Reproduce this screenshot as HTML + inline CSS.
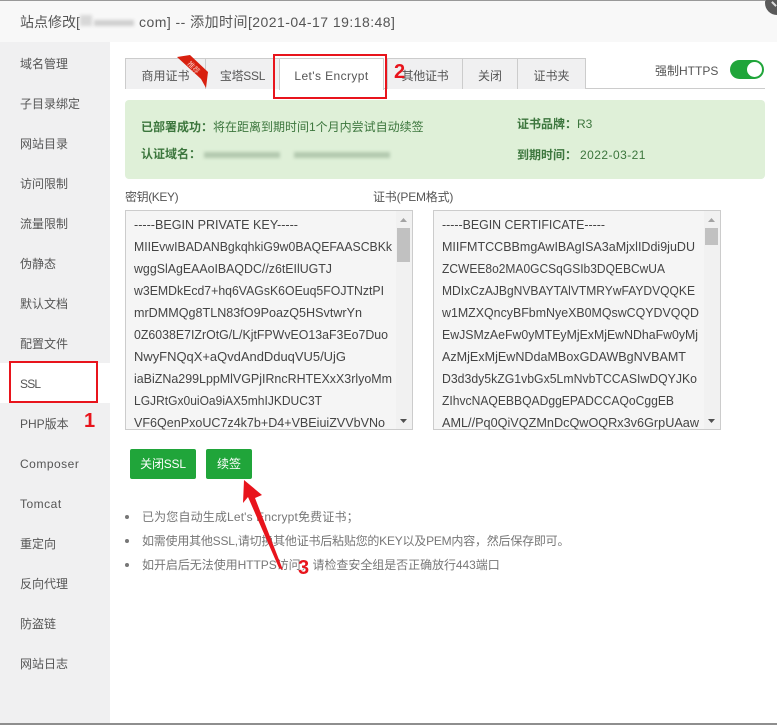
<!DOCTYPE html>
<html lang="zh">
<head>
<meta charset="utf-8">
<title>站点修改</title>
<style>
html,body{margin:0;padding:0;background:#fff}
#p{position:relative;width:777px;height:725px;overflow:hidden;background:#fff;font-family:"Liberation Sans","Noto Sans CJK SC",sans-serif;font-size:12px;color:#555}
#p div,#p span.a{position:absolute;white-space:nowrap}
.top{left:0;top:0;width:765px;height:1px;background:#999}
.head{left:0;top:1px;width:777px;height:41px;background:#f8f8f8}
.title{left:20px;top:13px;font-size:14px;line-height:18px;color:#555}
.side{left:0;top:42px;width:110px;height:681px;background:#f0f0f1}
.item{left:20px;line-height:20px;font-size:12px;color:#555}
.ssl{left:0;top:363px;width:110px;height:40px;background:#fff}
.bottom{left:0;top:723px;width:777px;height:2px;background:#8e8e8e}
.tabline{left:125px;top:88px;width:640px;height:1px;background:#ccc}
.tab{top:58px;height:30px;background:#f0f0f1;border:1px solid #ccc;border-bottom:0;box-sizing:content-box;text-align:center;line-height:35px;font-size:12px;color:#555}
.tab.on{background:#fff;height:31px;z-index:2}
.box{left:125px;top:100px;width:640px;height:79px;background:#dff0d8;border-radius:4px}
.g{color:#3c763d;line-height:18px;font-size:12px}
.b{font-weight:bold}
.lab{top:188px;line-height:18px;font-size:12px;color:#555}
.ta{top:210px;width:286px;height:218px;border:1px solid #ccc;background:#f5f5f5}
.sb{top:211px;width:16px;height:218px;background:#f1f1f1}
.th{top:228px;width:13px;background:#c1c1c1}
.btn{top:449px;height:30px;background:#20a53a;border-radius:2px;color:#fff;text-align:center;line-height:31px;font-size:12px}
.li{left:142px;line-height:18px;font-size:12px;color:#777}
.dot{left:125px;width:4px;height:4px;border-radius:50%;background:#777}
.rb{border:2px solid #e8141c;box-sizing:border-box;z-index:5}
.num{color:#e8141c;font-weight:bold;font-size:20px;line-height:22px;z-index:6}
.blur{filter:blur(1.6px)}
svg{position:absolute;left:0;top:0}
svg text{font-family:"Liberation Sans",sans-serif;font-size:12.5px;fill:#444}
</style>
</head>
<body>
<div id="p">
  <div class="head"></div>
  <div class="top"></div>
  <div class="title">站点修改[</div>
  <div class="blur" style="left:80px;top:15px;width:12px;height:11px;background:#d8d8d8"></div>
  <div class="blur" style="left:94px;top:20px;width:40px;height:6px;background:#cfcfcf"></div>
  <div class="title" style="left:139px;letter-spacing:.46px">com] -- 添加时间[2021-04-17 19:18:48]</div>
  <div style="left:765px;top:-9px;width:24px;height:24px;border-radius:50%;background:#5a5a5a"></div>
  <div style="left:771px;top:3px;width:6px;height:2px;background:#ddd;transform:rotate(45deg)"></div>

  <div class="side"></div>
  <div class="ssl"></div>
  <div class="item" style="top:54px">域名管理</div>
  <div class="item" style="top:94px">子目录绑定</div>
  <div class="item" style="top:134px">网站目录</div>
  <div class="item" style="top:174px">访问限制</div>
  <div class="item" style="top:214px">流量限制</div>
  <div class="item" style="top:254px">伪静态</div>
  <div class="item" style="top:294px">默认文档</div>
  <div class="item" style="top:334px">配置文件</div>
  <div class="item" style="top:374px;letter-spacing:-.8px">SSL</div>
  <div class="item" style="top:414px">PHP版本</div>
  <div class="item" style="top:454px;letter-spacing:.5px">Composer</div>
  <div class="item" style="top:494px;letter-spacing:.5px">Tomcat</div>
  <div class="item" style="top:534px">重定向</div>
  <div class="item" style="top:574px">反向代理</div>
  <div class="item" style="top:614px">防盗链</div>
  <div class="item" style="top:654px">网站日志</div>
  <div class="bottom"></div>

  <div class="tabline"></div>
  <div class="tab" style="left:125px;width:79px">商用证书</div>
  <div class="tab" style="left:205px;width:73px;letter-spacing:-.3px">宝塔SSL</div>
  <div class="tab on" style="left:279px;width:103px;letter-spacing:.4px">Let's Encrypt</div>
  <div class="tab" style="left:387px;width:74px;letter-spacing:-.3px">其他证书</div>
  <div class="tab" style="left:462px;width:54px">关闭</div>
  <div class="tab" style="left:517px;width:67px">证书夹</div>
  <svg width="777" height="725" style="z-index:3">
    <polygon points="177,57 190,55 208,72 206,88 201,79" fill="#d8200f"/>
    <text x="194" y="70" text-anchor="middle" transform="rotate(45 194 67)" style="font-family:'Liberation Sans','Noto Sans CJK SC',sans-serif;font-size:7px;fill:#f6c0b8">推荐</text>
  </svg>

  <div style="left:655px;top:62px;line-height:18px;font-size:12px;color:#555">强制HTTPS</div>
  <div style="left:730px;top:60px;width:34px;height:19px;border-radius:10px;background:#20a53a"></div>
  <div style="left:747px;top:62px;width:15px;height:15px;border-radius:50%;background:#fff"></div>

  <div class="box"></div>
  <div class="g b" style="left:141px;top:118px">已部署成功：</div>
  <div class="g" style="left:213px;top:118px">将在距离到期时间1个月内尝试自动续签</div>
  <div class="g b" style="left:141px;top:145px">认证域名：</div>
  <div class="blur" style="left:204px;top:152px;width:76px;height:6px;background:#b3c8af"></div>
  <div class="blur" style="left:294px;top:152px;width:96px;height:6px;background:#b3c9af"></div>
  <div class="g b" style="left:517px;top:115px">证书品牌：</div>
  <div class="g" style="left:577px;top:115px">R3</div>
  <div class="g b" style="left:517px;top:146px">到期时间：</div>
  <div class="g" style="left:580px;top:146px;letter-spacing:.45px">2022-03-21</div>

  <div class="lab" style="left:125px;letter-spacing:-.4px">密钥(KEY)</div>
  <div class="lab" style="left:373px;letter-spacing:-.2px">证书(PEM格式)</div>
  <div class="ta" style="left:125px"></div>
  <div class="ta" style="left:433px"></div>
  <div class="sb" style="left:396px"></div>
  <div class="sb" style="left:704px"></div>
  <div class="th" style="left:397px;height:34px"></div>
  <div class="th" style="left:705px;height:17px"></div>
  <svg width="777" height="725">
    <polygon points="400,222 407,222 403.500,218" fill="#a3a3a3"/>
    <polygon points="400,419 407,419 403.500,423" fill="#505050"/>
    <polygon points="708,222 715,222 711.500,218" fill="#a3a3a3"/>
    <polygon points="708,419 715,419 711.500,423" fill="#505050"/>
    <text x="134" y="229" textLength="164" lengthAdjust="spacingAndGlyphs">-----BEGIN PRIVATE KEY-----</text>
    <text x="134" y="251" textLength="258" lengthAdjust="spacingAndGlyphs">MIIEvwIBADANBgkqhkiG9w0BAQEFAASCBKk</text>
    <text x="134" y="273" textLength="198" lengthAdjust="spacingAndGlyphs">wggSlAgEAAoIBAQDC//z6tEIlUGTJ</text>
    <text x="134" y="295" textLength="250" lengthAdjust="spacingAndGlyphs">w3EMDkEcd7+hq6VAGsK6OEuq5FOJTNztPI</text>
    <text x="134" y="317" textLength="228" lengthAdjust="spacingAndGlyphs">mrDMMQg8TLN83fO9PoazQ5HSvtwrYn</text>
    <text x="134" y="339" textLength="254" lengthAdjust="spacingAndGlyphs">0Z6038E7IZrOtG/L/KjtFPWvEO13aF3Eo7Duo</text>
    <text x="134" y="361" textLength="212" lengthAdjust="spacingAndGlyphs">NwyFNQqX+aQvdAndDduqVU5/UjG</text>
    <text x="134" y="383" textLength="258" lengthAdjust="spacingAndGlyphs">iaBiZNa299LppMlVGPjIRncRHTEXxX3rlyoMm</text>
    <text x="134" y="405" textLength="188" lengthAdjust="spacingAndGlyphs">LGJRtGx0uiOa9iAX5mhIJKDUC3T</text>
    <text x="134" y="427" textLength="251" lengthAdjust="spacingAndGlyphs">VF6QenPxoUC7z4k7b+D4+VBEiuiZVVbVNo</text>
    <text x="442" y="229" textLength="163" lengthAdjust="spacingAndGlyphs">-----BEGIN CERTIFICATE-----</text>
    <text x="442" y="251" textLength="253" lengthAdjust="spacingAndGlyphs">MIIFMTCCBBmgAwIBAgISA3aMjxlIDdi9juDU</text>
    <text x="442" y="273" textLength="223" lengthAdjust="spacingAndGlyphs">ZCWEE8o2MA0GCSqGSIb3DQEBCwUA</text>
    <text x="442" y="295" textLength="253" lengthAdjust="spacingAndGlyphs">MDIxCzAJBgNVBAYTAlVTMRYwFAYDVQQKE</text>
    <text x="442" y="317" textLength="257" lengthAdjust="spacingAndGlyphs">w1MZXQncyBFbmNyeXB0MQswCQYDVQQD</text>
    <text x="442" y="339" textLength="256" lengthAdjust="spacingAndGlyphs">EwJSMzAeFw0yMTEyMjExMjEwNDhaFw0yMj</text>
    <text x="442" y="361" textLength="244" lengthAdjust="spacingAndGlyphs">AzMjExMjEwNDdaMBoxGDAWBgNVBAMT</text>
    <text x="442" y="383" textLength="255" lengthAdjust="spacingAndGlyphs">D3d3dy5kZG1vbGx5LmNvbTCCASIwDQYJKo</text>
    <text x="442" y="405" textLength="232" lengthAdjust="spacingAndGlyphs">ZIhvcNAQEBBQADggEPADCCAQoCggEB</text>
    <text x="442" y="427" textLength="257" lengthAdjust="spacingAndGlyphs">AML//Pq0QiVQZMnDcQwOQRx3v6GrpUAaw</text>
  </svg>

  <div class="btn" style="left:130px;width:66px;letter-spacing:-.2px">关闭SSL</div>
  <div class="btn" style="left:206px;width:46px">续签</div>

  <div class="dot" style="top:515px"></div>
  <div class="dot" style="top:539px"></div>
  <div class="dot" style="top:563px"></div>
  <div class="li" style="top:508px;letter-spacing:.15px">已为您自动生成Let's Encrypt免费证书；</div>
  <div class="li" style="top:532px;letter-spacing:-.22px">如需使用其他SSL,请切换其他证书后粘贴您的KEY以及PEM内容，然后保存即可。</div>
  <div class="li" style="top:556px;letter-spacing:-.05px">如开启后无法使用HTTPS访问，请检查安全组是否正确放行443端口</div>

  <div class="rb" style="left:273px;top:54px;width:114px;height:45px"></div>
  <div class="rb" style="left:9px;top:361px;width:89px;height:42px"></div>
  <div class="num" style="left:84px;top:410px">1</div>
  <div class="num" style="left:394px;top:61px">2</div>
  <div class="num" style="left:298px;top:557px">3</div>
  <svg width="777" height="725" style="z-index:6">
    <polygon points="244,480 262,495 255,498 283,570 279,568 248,497 243,503" fill="#e8141c"/>
  </svg>
</div>
</body>
</html>
